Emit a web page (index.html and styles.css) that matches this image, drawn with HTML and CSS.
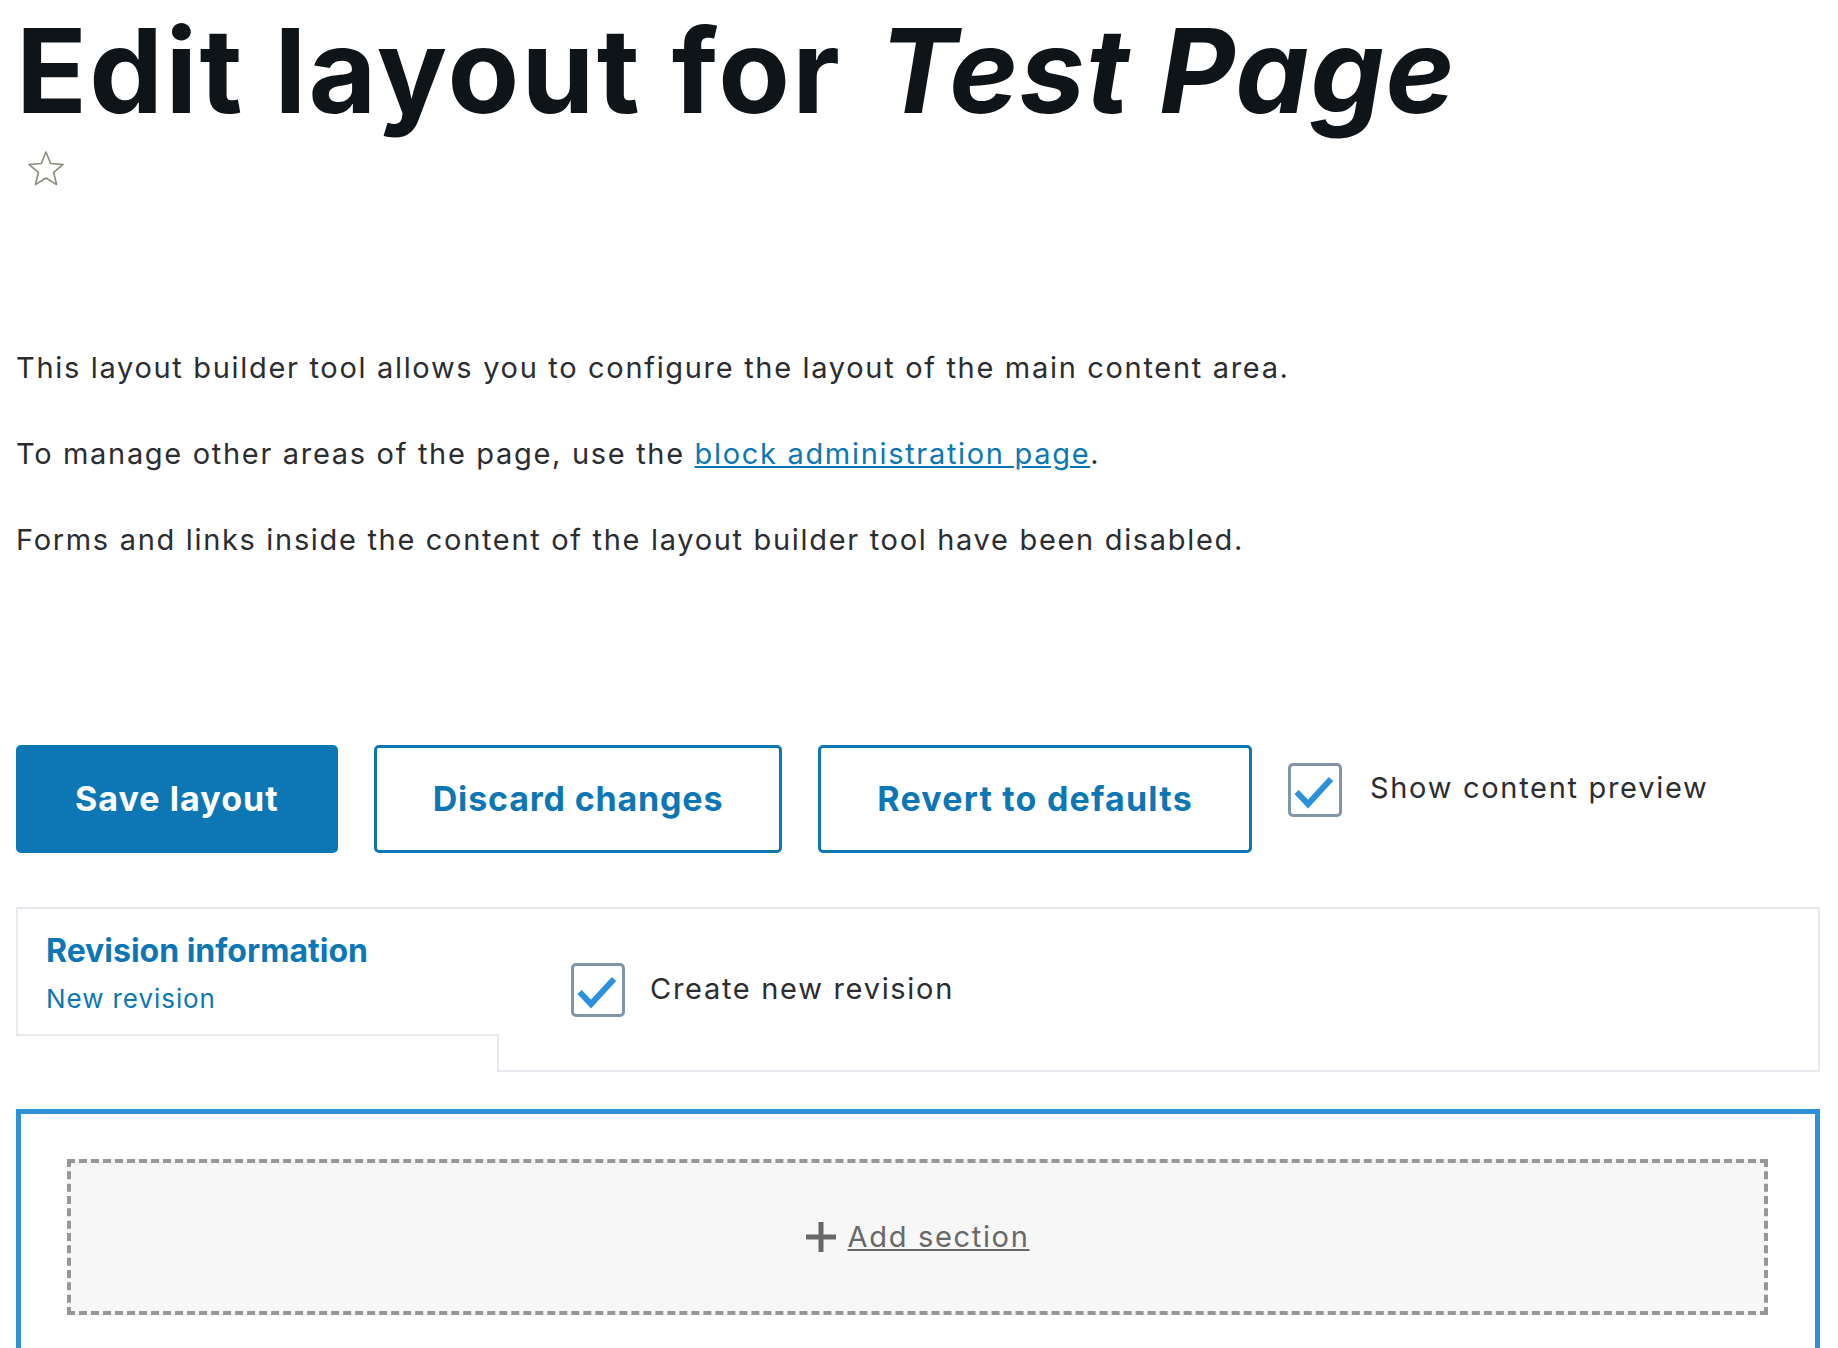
FILE: index.html
```html
<!DOCTYPE html>
<html lang="en">
<head>
<meta charset="utf-8">
<title>Edit layout for Test Page</title>
<link rel="stylesheet" href="styles.css">
</head>
<body>
<main class="page">
  <h1 class="title">Edit layout for <em>Test Page</em></h1>
  <div class="shortcut">
    <svg viewBox="0 0 38 38" aria-hidden="true"><polygon points="19,2 23.7,13.53 36.12,14.44 26.61,22.47 29.58,34.56 19,28 8.42,34.56 11.39,22.47 1.88,14.44 14.3,13.53" fill="none" stroke="#8e8b7a" stroke-width="1.6" stroke-linejoin="round"/></svg>
  </div>
  <div class="help">
    <p>This layout builder tool allows you to configure the layout of the main content area.</p>
    <p>To manage other areas of the page, use the <a href="#">block administration page</a>.</p>
    <p>Forms and links inside the content of the layout builder tool have been disabled.</p>
  </div>
  <div class="actions">
    <button class="btn btn-primary">Save layout</button>
    <button class="btn btn-discard">Discard changes</button>
    <button class="btn btn-revert">Revert to defaults</button>
    <label class="check">
      <span class="box"><svg viewBox="0 0 48 48" aria-hidden="true"><polyline points="5.6,26 17,38 40,13" fill="none" stroke="#2b91dc" stroke-width="6"/></svg></span>
      <span class="check-text">Show content preview</span>
    </label>
  </div>
  <div class="vtabs">
    <div class="vtabs-menu">
      <div class="tab-title">Revision information</div>
      <div class="tab-summary">New revision</div>
    </div>
    <div class="vtabs-pane">
      <label class="check">
        <span class="box"><svg viewBox="0 0 48 48" aria-hidden="true"><polyline points="5.6,26 17,38 40,13" fill="none" stroke="#2b91dc" stroke-width="6"/></svg></span>
        <span class="check-text">Create new revision</span>
      </label>
    </div>
  </div>
  <div class="layout-builder">
    <div class="add-section">
      <a class="add-link" href="#"><svg class="plus" viewBox="0 0 30 30" aria-hidden="true"><rect x="12.5" y="0" width="5" height="30" fill="#686868"/><rect x="0" y="12.5" width="30" height="5" fill="#686868"/></svg><span>Add section</span></a>
    </div>
  </div>
</main>
</body>
</html>
```

FILE: styles.css
```css
* { box-sizing: border-box; }
html, body { margin: 0; background: #fff; }
body { font-family: "Inter", "Liberation Sans", sans-serif; color: #2b2d31; }
.page { padding: 0 18px 0 16px; }
.title { margin: 0; font-size: 117px; line-height: 142px; font-weight: 700; color: #0f1418; letter-spacing: 2.3px; white-space: nowrap; }
.title em { font-style: italic; margin-left: 7px; letter-spacing: 1.2px; }
.shortcut { margin-top: 7.5px; height: 38px; padding-left: 11px; }
.shortcut svg { display: block; width: 38px; height: 38px; }
.help { margin-top: 159px; display: flex; flex-direction: column; gap: 44px; font-size: 29px; line-height: 42px; letter-spacing: 1.68px; }
.help p { margin: 0; white-space: nowrap; }
.help a { color: #0d77b5; text-decoration: underline; }
.actions { margin-top: 184px; display: flex; gap: 36px; align-items: flex-start; }
.btn { height: 108px; padding: 0 56px; border: 3px solid #0d77b5; border-radius: 5px; background: #fff; color: #0d77b5; font: 700 34px/1 "Inter", sans-serif; letter-spacing: 1.05px; white-space: nowrap; }
.btn-primary { background: #0d77b5; color: #fff; }
.btn-discard { letter-spacing: 0.82px; }
.btn-revert { letter-spacing: 1.2px; }
.check { display: flex; align-items: center; gap: 28px; font-size: 29px; line-height: 40px; letter-spacing: 1.7px; color: #2b2d31; white-space: nowrap; }
.check-text { margin-bottom: 4px; }
.actions .check { margin-top: 18px; }
.box { flex: none; width: 54px; height: 54px; border: 3px solid #8196ab; border-radius: 5px; background: #fff; }
.box svg { display: block; width: 48px; height: 48px; }
.vtabs { margin-top: 54px; display: flex; align-items: flex-start; }
.vtabs-menu { flex: none; width: 483px; height: 129px; margin-right: -2px; position: relative; z-index: 1; background: #fff; border: 2px solid #e6eaee; border-right: 0; padding: 22px 0 0 28px; }
.tab-title { font-weight: 700; font-size: 32px; line-height: 40px; color: #0d77b5; white-space: nowrap; }
.tab-summary { margin-top: 10px; font-size: 26px; line-height: 36px; letter-spacing: 0.93px; color: #0d77b5; }
.vtabs-pane { flex: 1; height: 165px; border: 2px solid #e6eaee; padding: 54px 0 0 72px; }
.vtabs-pane .check { gap: 25px; }
.vtabs-pane .check-text { margin-bottom: 1px; }
.layout-builder { margin-top: 37px; border: 5px solid #2f91da; padding: 45px 47px 200px 46px; }
.add-section { height: 156px; border: 4px dashed #979797; background: #f7f7f7; display: flex; align-items: center; justify-content: center; }
.add-link { display: inline-flex; align-items: center; gap: 12px; color: #686868; font-size: 29px; letter-spacing: 1.68px; text-decoration: underline; white-space: nowrap; }
.plus { flex: none; width: 30px; height: 30px; }
```
